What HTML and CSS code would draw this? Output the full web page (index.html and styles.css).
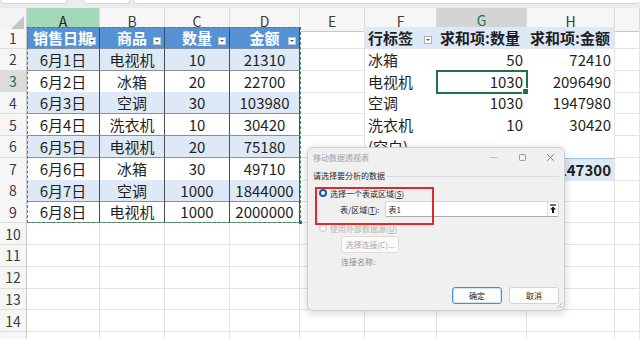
FILE: index.html
```html
<!DOCTYPE html>
<html lang="zh-CN">
<head>
    <meta charset="UTF-8">
    <meta name="viewport" content="width=device-width, initial-scale=1.0">
    <title>移动数据透视表</title>
    <link rel="stylesheet" href="styles.css">
</head>
<body>

<div class="topbar">
    <div class="box box-name"></div>
    <div class="box box-fx"></div>
    <div class="box box-formula"></div>
</div>

<div class="sheet">
    <div class="row head">
        <div class="corner"><span class="tri"></span></div>
        <div class="col col-a">A</div>
        <div class="col">B</div>
        <div class="col">C</div>
        <div class="col">D</div>
        <div class="col">E</div>
        <div class="col">F</div>
        <div class="col sel">G</div>
        <div class="col">H</div>
        <div class="col"></div>
    </div>

    <div class="row">
        <div class="num">1</div>
        <div class="c t th">销售日期<span class="flt"></span></div>
        <div class="c t th">商品<span class="flt"></span></div>
        <div class="c t th">数量<span class="flt"></span></div>
        <div class="c t th">金额<span class="flt"></span></div>
        <div class="c"></div>
        <div class="c pv ph">行标签<span class="flt gray"></span></div>
        <div class="c pv ph">求和项:数量</div>
        <div class="c pv ph last">求和项:金额</div>
        <div class="c"></div>
    </div>

    <div class="row">
        <div class="num">2</div>
        <div class="c t band">6月1日</div>
        <div class="c t band">电视机</div>
        <div class="c t band">10</div>
        <div class="c t band">21310</div>
        <div class="c"></div>
        <div class="c pv">冰箱</div>
        <div class="c pv r">50</div>
        <div class="c pv r last">72410</div>
        <div class="c"></div>
    </div>

    <div class="row">
        <div class="num sel">3</div>
        <div class="c t">6月2日</div>
        <div class="c t">冰箱</div>
        <div class="c t">20</div>
        <div class="c t">22700</div>
        <div class="c"></div>
        <div class="c pv">电视机</div>
        <div class="c pv r active">1030</div>
        <div class="c pv r last">2096490</div>
        <div class="c"></div>
    </div>

    <div class="row">
        <div class="num">4</div>
        <div class="c t band">6月3日</div>
        <div class="c t band">空调</div>
        <div class="c t band">30</div>
        <div class="c t band">103980</div>
        <div class="c"></div>
        <div class="c pv">空调</div>
        <div class="c pv r">1030</div>
        <div class="c pv r last">1947980</div>
        <div class="c"></div>
    </div>

    <div class="row">
        <div class="num">5</div>
        <div class="c t">6月4日</div>
        <div class="c t">洗衣机</div>
        <div class="c t">10</div>
        <div class="c t">30420</div>
        <div class="c"></div>
        <div class="c pv">洗衣机</div>
        <div class="c pv r">10</div>
        <div class="c pv r last">30420</div>
        <div class="c"></div>
    </div>

    <div class="row">
        <div class="num">6</div>
        <div class="c t band">6月5日</div>
        <div class="c t band">电视机</div>
        <div class="c t band">20</div>
        <div class="c t band">75180</div>
        <div class="c"></div>
        <div class="c pv">(空白)</div>
        <div class="c pv r"></div>
        <div class="c pv r last"></div>
        <div class="c"></div>
    </div>

    <div class="row">
        <div class="num">7</div>
        <div class="c t">6月6日</div>
        <div class="c t">冰箱</div>
        <div class="c t">30</div>
        <div class="c t">49710</div>
        <div class="c"></div>
        <div class="c pv tot">总计</div>
        <div class="c pv r tot">2120</div>
        <div class="c pv r tot last">4147300</div>
        <div class="c"></div>
    </div>

    <div class="row">
        <div class="num">8</div>
        <div class="c t band">6月7日</div>
        <div class="c t band">空调</div>
        <div class="c t band">1000</div>
        <div class="c t band">1844000</div>
        <div class="c"></div>
        <div class="c"></div>
        <div class="c"></div>
        <div class="c"></div>
        <div class="c"></div>
    </div>

    <div class="row">
        <div class="num">9</div>
        <div class="c t">6月8日</div>
        <div class="c t">电视机</div>
        <div class="c t">1000</div>
        <div class="c t">2000000</div>
        <div class="c"></div>
        <div class="c"></div>
        <div class="c"></div>
        <div class="c"></div>
        <div class="c"></div>
    </div>

    <div class="row">
        <div class="num">10</div>
        <div class="c"></div><div class="c"></div><div class="c"></div><div class="c"></div>
        <div class="c"></div><div class="c"></div><div class="c"></div><div class="c"></div><div class="c"></div>
    </div>
    <div class="row">
        <div class="num">11</div>
        <div class="c"></div><div class="c"></div><div class="c"></div><div class="c"></div>
        <div class="c"></div><div class="c"></div><div class="c"></div><div class="c"></div><div class="c"></div>
    </div>
    <div class="row">
        <div class="num">12</div>
        <div class="c"></div><div class="c"></div><div class="c"></div><div class="c"></div>
        <div class="c"></div><div class="c"></div><div class="c"></div><div class="c"></div><div class="c"></div>
    </div>
    <div class="row">
        <div class="num">13</div>
        <div class="c"></div><div class="c"></div><div class="c"></div><div class="c"></div>
        <div class="c"></div><div class="c"></div><div class="c"></div><div class="c"></div><div class="c"></div>
    </div>
    <div class="row">
        <div class="num">14</div>
        <div class="c"></div><div class="c"></div><div class="c"></div><div class="c"></div>
        <div class="c"></div><div class="c"></div><div class="c"></div><div class="c"></div><div class="c"></div>
    </div>
    <div class="row">
        <div class="num"></div>
        <div class="c"></div><div class="c"></div><div class="c"></div><div class="c"></div>
        <div class="c"></div><div class="c"></div><div class="c"></div><div class="c"></div><div class="c"></div>
    </div>

    <!-- copy marquee around A1:D9 -->
    <div class="ants"></div>
</div>

<div class="dialog">
    <div class="dlg-title">
        <span class="dlg-name">移动数据透视表</span>
        <span class="ctl">
            <svg width="9" height="9" viewBox="0 0 9 9"><path d="M0.5 4.5h8" stroke="#c4c4c4" stroke-width="1"/></svg>
        </span>
        <span class="ctl">
            <svg width="9" height="9" viewBox="0 0 9 9"><rect x="1.5" y="1.5" width="6" height="6" rx="1" fill="none" stroke="#9a9a9a" stroke-width="1"/></svg>
        </span>
        <span class="ctl">
            <svg width="9" height="9" viewBox="0 0 9 9"><path d="M1 1l7 7M8 1l-7 7" stroke="#8a8a8a" stroke-width="1"/></svg>
        </span>
    </div>

    <div class="dlg-body">
        <div class="group"><span>请选择要分析的数据</span><span class="line"></span></div>
        <div class="opt"><span class="radio on"></span><span>选择一个表或区域(<u>S</u>)</span></div>
        <div class="field">
            <span class="lbl">表/区域(<u>T</u>):</span>
            <div class="input">
                <span class="val">表1</span>
                <span class="pick">
                    <svg width="8" height="10" viewBox="0 0 8 10"><path d="M1 1h6" stroke="#111" stroke-width="1.2"/><path d="M4 2.5L1 5.5h2v3.5h2V5.5h2z" fill="#111"/></svg>
                </span>
            </div>
        </div>
        <div class="opt off"><span class="radio"></span><span>使用外部数据源(<u>U</u>)</span></div>
        <div class="btn-conn">选择连接(C)...</div>
        <div class="conn-name">连接名称:</div>
        <div class="footer">
            <button class="btn primary">确定</button>
            <button class="btn">取消</button>
        </div>
    </div>

    <div class="mark"></div>
    <svg class="grip" width="7" height="7" viewBox="0 0 7 7"><path d="M6 1L1 6M6 4L4 6" stroke="#a8a8a8" stroke-width="0.8"/></svg>
</div>

</body>
</html>
```

FILE: styles.css
```css
* {
    box-sizing: border-box;
}
body {
    margin: 0;
    width: 640px;
    height: 339px;
    overflow: hidden;
    background-color: #fff;
    color: #1f1f1f;
    font-family: "Noto Sans CJK SC", "Noto Sans", sans-serif;
}

/* formula bar remains at the top */
.topbar {
    height: 8px;
    background-color: #ececec;
    display: flex;
}
.box {
    height: 4px;
    background-color: #fff;
    border: 1px solid #d8d8d8;
    border-top: none;
    border-radius: 0 0 4px 4px;
}
.box-name {
    width: 68px;
}
.box-fx {
    width: 47px;
    margin-left: 15px;
}
.box-formula {
    flex: 1;
    margin-left: 3px;
    border-right: none;
}

/* sheet grid */
.sheet {
    position: relative;
}
.row {
    display: grid;
    grid-template-columns: 27px 73px 65px 65px 70px 65px 72px 90px 88px 1fr;
    height: 21.8px;
}
.row.head {
    height: 19px;
}
.corner {
    background-color: #f3f3f3;
    border-right: 1px solid #d0d0d0;
    border-bottom: 1px solid #c8c8c8;
    display: flex;
    justify-content: flex-end;
    align-items: flex-end;
    padding: 0 2px 2px 0;
}
.tri {
    width: 13px;
    height: 13px;
    background-color: #c4c4c4;
    clip-path: polygon(100% 0, 100% 100%, 0 100%);
}
.col {
    background-color: #f6f6f6;
    border-right: 1px solid #dadada;
    border-bottom: 1px solid #c8c8c8;
    display: flex;
    justify-content: center;
    align-items: center;
    padding-top: 2px;
    font-size: 14px;
    color: #3c3c3c;
}
.col-a {
    background-color: #a3d9b9;
    color: #222;
}
.col.sel {
    background-color: #d4d4d4;
    color: #1e7145;
    border-bottom: 2px solid #217346;
}
.num {
    background-color: #f6f6f6;
    border-right: 1px solid #c8c8c8;
    border-bottom: 1px solid #dedede;
    display: flex;
    justify-content: center;
    align-items: center;
    font-size: 14px;
    color: #3c3c3c;
}
.num.sel {
    background-color: #dcdcdc;
    color: #1e7145;
}
.c {
    border-right: 1px solid #e3e3e3;
    border-bottom: 1px solid #e3e3e3;
    display: flex;
    justify-content: center;
    align-items: center;
    font-size: 15px;
    white-space: nowrap;
    overflow: visible;
}

/* sales table A1:D9 */
.t {
    border-right-color: #4d4d4d;
    border-bottom-color: #8e8e8e;
}
.th {
    position: relative;
    background-color: #5592d4;
    color: #fff;
    font-weight: bold;
    border-right-color: #2f4f70;
    border-bottom-color: #7d8fa3;
}
.band {
    background-color: #dde9f6;
}
.flt {
    position: absolute;
    right: 3px;
    bottom: 3px;
    width: 8px;
    height: 8px;
    background-color: #fff;
    border: 1px solid #b8c6d6;
}
.flt::after {
    content: "";
    position: absolute;
    left: 1px;
    top: 2px;
    border-left: 2px solid transparent;
    border-right: 2px solid transparent;
    border-top: 2px solid #555;
}
.flt.gray {
    border-color: #b0b0b0;
    right: 4px;
    bottom: 4px;
}

/* pivot table F1:H7 */
.pv {
    justify-content: flex-start;
    padding-left: 3px;
    border-right-color: transparent;
    border-bottom-color: transparent;
}
.pv.r {
    justify-content: flex-end;
    padding-left: 0;
    padding-right: 3px;
}
.pv.last {
    border-right-color: #e3e3e3;
}
.ph {
    position: relative;
    background-color: #dde9f6;
    font-weight: bold;
}
.tot {
    background-color: #dde9f6;
    font-weight: bold;
    border-top: 1px solid #9dc3e6;
}
.active {
    position: relative;
    outline: 2px solid #217346;
    outline-offset: -1px;
}
.active::after {
    content: "";
    position: absolute;
    right: -3px;
    bottom: -3px;
    width: 5px;
    height: 5px;
    background-color: #217346;
    border: 1px solid #fff;
}
.ants {
    position: absolute;
    left: 27px;
    top: 19px;
    width: 274px;
    height: 196.4px;
    border: 1px dashed #3f8c60;
    pointer-events: none;
}
.ants::after {
    content: "";
    position: absolute;
    right: -2px;
    bottom: -2px;
    width: 4px;
    height: 4px;
    background-color: #2a5db0;
    clip-path: polygon(100% 0, 100% 100%, 0 100%);
}

/* move pivot table dialog */
.dialog {
    position: absolute;
    left: 307px;
    top: 147px;
    width: 258px;
    height: 164px;
    background-color: #f0f0f0;
    border: 1px solid #cfcfcf;
    border-radius: 6px;
    box-shadow: 0 2px 8px rgba(0, 0, 0, 0.18);
    font-size: 8px;
    color: #2a2a2a;
}
.dlg-title {
    height: 19px;
    display: flex;
    align-items: center;
    padding-left: 5px;
}
.dlg-name {
    flex: 1;
    color: #a0a0a0;
}
.ctl {
    width: 29px;
    display: flex;
    justify-content: center;
}
.ctl:last-child {
    width: 27px;
}
.dlg-body {
    padding: 0 5px;
}
.group {
    height: 16px;
    display: flex;
    align-items: center;
    gap: 2px;
}
.group .line {
    flex: 1;
    border-top: 1px solid #dadada;
    margin-top: 2px;
}
.opt {
    height: 16px;
    margin-top: 2px;
    display: flex;
    align-items: center;
    padding-left: 6px;
    gap: 3px;
}
.opt.off {
    margin-top: 3px;
    color: #b4b4b4;
}
.radio {
    width: 8px;
    height: 8px;
    border-radius: 50%;
    border: 1px solid #c8c8c8;
    background-color: #f7f7f7;
}
.radio.on {
    background-color: #fff;
    border: 2.5px solid #0a5fb4;
}
.field {
    height: 16px;
    display: flex;
    align-items: center;
}
.lbl {
    width: 45px;
    margin-left: 27px;
}
.input {
    width: 176px;
    height: 16px;
    background-color: #fff;
    border: 1px solid #d2d2d2;
    border-bottom-color: #a9a9a9;
    border-radius: 2px;
    display: flex;
    align-items: center;
    padding-left: 3px;
}
.val {
    flex: 1;
}
.pick {
    width: 11px;
    height: 14px;
    border-left: 1px solid #dcdcdc;
    display: flex;
    justify-content: center;
    align-items: center;
}
.btn-conn {
    width: 58px;
    height: 17px;
    margin-left: 28px;
    background-color: #fbfbfb;
    border: 1px solid #dcdcdc;
    border-radius: 3px;
    color: #a8a8a8;
    display: flex;
    justify-content: center;
    align-items: center;
}
.conn-name {
    height: 16px;
    margin-left: 28px;
    display: flex;
    align-items: center;
    color: #8c8c8c;
}
.footer {
    margin-top: 18px;
    display: flex;
    justify-content: flex-end;
    gap: 7px;
    padding-right: 0;
}
.btn {
    width: 50px;
    height: 17px;
    padding: 0;
    font-family: inherit;
    font-size: 8px;
    color: #222;
    background-color: #fdfdfd;
    border: 1px solid #d2d2d2;
    border-radius: 3px;
}
.btn.primary {
    border-color: #4a8fd6;
    box-shadow: inset 0 0 0 1px #cfe3f7;
}
.mark {
    position: absolute;
    left: 7px;
    top: 39px;
    width: 119px;
    height: 38px;
    border: 2px solid #e5262a;
    pointer-events: none;
}
.grip {
    position: absolute;
    right: 1px;
    bottom: 1px;
}
```
